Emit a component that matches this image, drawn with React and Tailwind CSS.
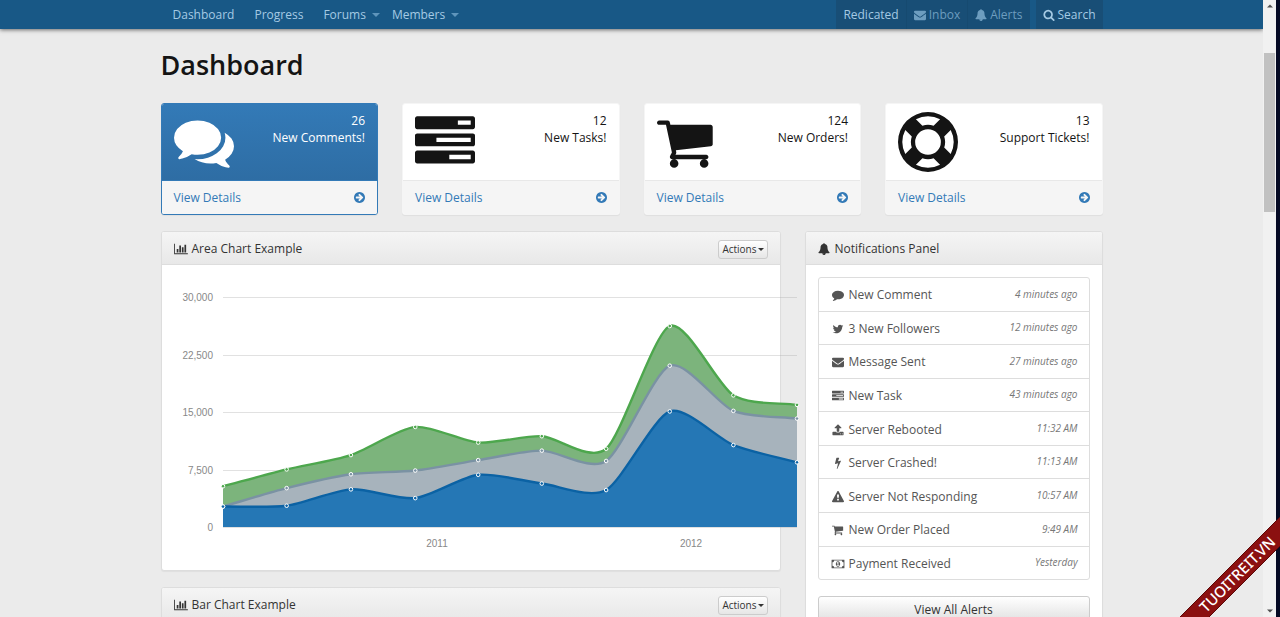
import React from "react";

const ICONS = {
  comments: { d: "M1408 768q0 139-94 257t-256.5 186.5-353.5 68.5q-86 0-176-16-124 88-278 128-36 9-86 16h-3q-11 0-20.5-8t-11.5-21q-1-3-1-6.5t.5-6.5 2-6l2.5-5t3.5-5.5 4-5 4.5-5 4-4.5q5-6 23-25t26-29.5 22.5-29 25-38.5 20.5-44q-124-72-195-177t-71-224q0-139 94-257t256.5-186.5 353.5-68.5 353.5 68.5 256.5 186.5 94 257zm384 256q0 120-71 224.5t-195 176.5q10 24 20.5 44t25 38.5 22.5 29 26 29.5 23 25q1 1 4 4.5t4.5 5 4 5 3.5 5.5l2.5 5t2 6 .5 6.5-1 6.5q-3 14-13 22t-22 7q-50-7-86-16-154-40-278-128-90 16-176 16-271 0-472-132 58 4 88 4 161 0 309-45t264-129q125-92 192-212t67-254q0-77-23-152 129 71 204 178t75 230z" },
  tasks: { d: "M1024 1408h640v-128h-640v128zm-384-512h1024v-128h-1024v128zm640-512h384v-128h-384v128zm512 832v256q0 26-19 45t-45 19h-1664q-26 0-45-19t-19-45v-256q0-26 19-45t45-19h1664q26 0 45 19t19 45zm0-512v256q0 26-19 45t-45 19h-1664q-26 0-45-19t-19-45v-256q0-26 19-45t45-19h1664q26 0 45 19t19 45zm0-512v256q0 26-19 45t-45 19h-1664q-26 0-45-19t-19-45v-256q0-26 19-45t45-19h1664q26 0 45 19t19 45z" },
  cart: { box: "64 0 1792 1792", d: "M704 1536q0 52-38 90t-90 38-90-38-38-90 38-90 90-38 90 38 38 90zm896 0q0 52-38 90t-90 38-90-38-38-90 38-90 90-38 90 38 38 90zm128-1088v512q0 24-16.5 42.5t-40.5 21.5l-1044 122q13 60 13 70 0 16-24 64h920q26 0 45 19t19 45-19 45-45 19h-1024q-26 0-45-19t-19-45q0-11 8-31.5t16-36 21.5-40 15.5-29.5l-177-823h-204q-26 0-45-19t-19-45 19-45 45-19h256q16 0 28.5 6.5t19.5 15.5 13 24.5 8 26 5.5 29.5 4.5 26h1201q26 0 45 19t19 45z" },
  support: { d: "M896 0q182 0 348 71t286 191 191 286 71 348-71 348-191 286-286 191-348 71-348-71-286-191-191-286-71-348 71-348 191-286 286-191 348-71zm0 128q-190 0-361 90l194 194q82-28 167-28t167 28l194-194q-171-90-361-90zm-678 1129l194-194q-28-82-28-167t28-167l-194-194q-90 171-90 361t90 361zm678 407q190 0 361-90l-194-194q-82 28-167 28t-167-28l-194 194q171 90 361 90zm0-384q159 0 271.5-112.5t112.5-271.5-112.5-271.5-271.5-112.5-271.5 112.5-112.5 271.5 112.5 271.5 271.5 112.5zm484-217l194 194q90-171 90-361t-90-361l-194 194q28 82 28 167t-28 167z" },
  arrow: { box: "128 128 1536 1536", d: "M1413 896q0-27-18-45l-91-91-362-362q-18-18-45-18t-45 18l-91 91q-18 18-18 45t18 45l189 189h-502q-26 0-45 19t-19 45v128q0 26 19 45t45 19h502l-189 189q-18 18-18 45t18 45l91 91q18 18 45 18t45-18l362-362 91-91q18-18 18-45zm251 0q0 209-103 385.5t-279.5 279.5-385.5 103-385.5-103-279.5-279.5-103-385.5 103-385.5 279.5-279.5 385.5-103 385.5 103 279.5 279.5 103 385.5z" },
  chart: { box: "0 0 2048 1792", d: "M640 896v512h-256v-512h256zm384-512v1024h-256v-1024h256zm1024 1152v128h-2048v-1536h128v1408h1920zm-640-896v768h-256v-768h256zm384-384v1152h-256v-1152h256z" },
  comment: { d: "M1792 896q0 174-120 321.5t-326 233-450 85.5q-70 0-145-8-198 175-460 242-49 14-114 22-17 2-30.5-9t-17.5-29v-1q-3-4-.5-12t2-10 4.5-9.5l6-9 7-8.5 8-9q7-8 31-34.5t34.5-38 31-39.5 32.5-51 27-59 26-76q-157-89-247.5-220t-90.5-281q0-130 71-248.5t191-204.5 286-136.5 348-50.5q244 0 450 85.5t326 233 120 321.5z" },
  twitter: { d: "M1684 408q-67 98-162 167 1 14 1 42 0 130-38 259.5t-115.5 248.5-184.5 210.5-258 146-323 54.5q-271 0-496-145 35 4 78 4 225 0 401-138-105-2-188-64.5t-114-159.5q33 5 61 5 43 0 85-11-112-23-185.5-111.5t-73.5-205.5v-4q68 38 146 41-66-44-105-115t-39-154q0-88 44-163 121 149 294.5 238.5t371.5 99.5q-8-38-8-74 0-134 94.5-228.5t228.5-94.5q140 0 236 102 109-21 205-78-37 115-142 178 93-10 186-50z" },
  envelope: { d: "M1792 710v794q0 66-47 113t-113 47h-1472q-66 0-113-47t-47-113v-794q44 49 101 87 362 246 497 345 57 42 92.5 65.5t94.5 48 110 24.5h2q51 0 110-24.5t94.5-48 92.5-65.5q170-123 498-345 57-39 100-87zm0-294q0 79-49 151t-122 123q-376 261-468 325-10 7-42.5 30.5t-54 38-52 32.5-57.5 27-50 9h-2q-23 0-50-9t-57.5-27-52-32.5-54-38-42.5-30.5q-91-64-262-182.5t-205-142.5q-62-42-117-115.5t-55-136.5q0-78 41.5-130t118.5-52h1472q65 0 112.5 47t47.5 113z" },
  upload: { d: "M1344 1472q0-26-19-45t-45-19-45 19-19 45 19 45 45 19 45-19 19-45zm256 0q0-26-19-45t-45-19-45 19-19 45 19 45 45 19 45-19 19-45zm128-224v320q0 40-28 68t-68 28h-1472q-40 0-68-28t-28-68v-320q0-40 28-68t68-28h427q21 56 70.5 92t110.5 36h256q61 0 110.5-36t70.5-92h427q40 0 68 28t28 68zm-325-648q-17 40-59 40h-256v448q0 26-19 45t-45 19h-256q-26 0-45-19t-19-45v-448h-256q-42 0-59-40-17-39 14-69l448-448q18-19 45-19t45 19l448 448q31 30 14 69z" },
  bolt: { d: "M1333 566q18 20 7 44l-540 1157q-13 25-42 25-4 0-14-2-17-5-25.5-19t-4.5-30l197-808-406 101q-4 1-12 1-18 0-31-11-18-15-13-39l201-825q4-16 17-26t30-10h328q19 0 32 12.5t13 29.5q0 8-5 18l-171 463 396-98q8-2 12-2 19 0 34 15z" },
  warning: { d: "M1024 1375v-190q0-14-9.5-23.5t-22.5-9.5h-192q-13 0-22.5 9.5t-9.5 23.5v190q0 14 9.5 23.5t22.5 9.5h192q13 0 22.5-9.5t9.5-23.5zm-2-374l18-459q0-12-10-19-13-11-24-11h-220q-11 0-24 11-10 7-10 21l17 457q0 10 10 16.5t24 6.5h185q14 0 23.5-6.5t10.5-16.5zm-14-934l768 1408q35 63-2 126-17 29-46.5 46t-63.5 17h-1536q-34 0-63.5-17t-46.5-46q-37-63-2-126l768-1408q17-31 47-49t65-18 65 18 47 49z" },
  bell: { d: "M912 1696q0-16-16-16-59 0-101.5-42.5t-42.5-101.5q0-16-16-16t-16 16q0 73 51.5 124.5t124.5 51.5q16 0 16-16zm816-288q0 52-38 90t-90 38h-448q0 106-75 181t-181 75-181-75-75-181h-448q-52 0-90-38t-38-90q50-42 91-88t85-119.5 74.5-158.5 50-206 19.5-260q0-152 117-282.5t307-158.5q-8-19-8-39 0-40 28-68t68-28 68 28 28 68q0 20-8 39 190 28 307 158.5t117 282.5q0 139 19.5 260t50 206 74.5 158.5 85 119.5 91 88z" },
  search: { d: "M1216 832q0-185-131.5-316.5t-316.5-131.5-316.5 131.5-131.5 316.5 131.5 316.5 316.5 131.5 316.5-131.5 131.5-316.5zm512 832q0 52-38 90t-90 38q-54 0-90-38l-343-342q-179 124-399 124-143 0-273.5-55.5t-225-150-150-225-55.5-273.5 55.5-273.5 150-225 225-150 273.5-55.5 273.5 55.5 225 150 150 225 55.5 273.5q0 220-124 399l343 343q37 37 37 90z" },
  money: { box: "0 0 1920 1792", d: "M768 1152h384v-96h-128v-448h-114l-148 137 77 80q42-37 55-57h2v288h-128v96zm512-256q0 70-21 142t-59.5 134-101.5 101-138 39-138-39-101.5-101-59.5-134-21-142 21-142 59.5-134 101.5-101 138-39 138 39 101.5 101 59.5 134 21 142zm512 256v-512q-106 0-181-75t-75-181h-1152q0 106-75 181t-181 75v512q106 0 181 75t75 181h1152q0-106 75-181t181-75zm128-832v1152q0 26-19 45t-45 19h-1792q-26 0-45-19t-19-45v-1152q0-26 19-45t45-19h1792q26 0 45 19t19 45z" },
};

function Icon({ name, className }) {
  const icon = ICONS[name];
  return (
    <svg viewBox={icon.box || "0 0 1792 1792"} className={`shrink-0 ${className}`} fill="currentColor" aria-hidden="true">
      <path d={icon.d} />
    </svg>
  );
}

function Caret({ className }) {
  return (
    <svg viewBox="0 0 8 4" className={`shrink-0 ${className}`} fill="currentColor" aria-hidden="true">
      <path d="M0 0h8L4 4z" />
    </svg>
  );
}

function NavBar() {
  return (
    <nav className="relative h-[29px] shrink-0 bg-[#185886] text-xs text-[#a5cae4] shadow-[0_1px_4px_rgba(0,0,0,0.55)]">
      <div className="mx-auto flex h-full max-w-[942px] justify-between">
        <div className="flex items-center pl-3">
          <a href="#dashboard" className="mr-5">Dashboard</a>
          <a href="#progress" className="mr-5">Progress</a>
          <button type="button" className="mr-3 flex items-center gap-1.5">
            Forums <Caret className="h-1 w-2 text-[#5f95bc]" />
          </button>
          <button type="button" className="flex items-center gap-1.5">
            Members <Caret className="h-1 w-2 text-[#5f95bc]" />
          </button>
        </div>
        <div className="flex gap-1.5">
          <div className="flex bg-[#184e76]">
            <a href="#account" className="flex items-center border-r border-[#164a70] px-[7px]">Redicated</a>
            <a href="#inbox" className="flex items-center gap-[3px] border-r border-[#164a70] px-[7px] text-[#6d9dbf]">
              <Icon name="envelope" className="size-3" />Inbox
            </a>
            <a href="#alerts" className="flex items-center gap-[3px] px-[7px] text-[#6d9dbf]">
              <Icon name="bell" className="size-3" />Alerts
            </a>
          </div>
          <a href="#search" className="flex items-center gap-[3px] bg-[#184e76] px-[7px]">
            <Icon name="search" className="size-3" />Search
          </a>
        </div>
      </div>
    </nav>
  );
}

const CARDS = [
  { icon: "comments", count: 26, label: "New Comments!", active: true },
  { icon: "tasks", count: 12, label: "New Tasks!" },
  { icon: "cart", count: 124, label: "New Orders!" },
  { icon: "support", count: 13, label: "Support Tickets!" },
];

function StatCard({ icon, count, label, active }) {
  return (
    <section className={`overflow-hidden rounded-[3px] border bg-white shadow-[0_1px_1px_rgba(0,0,0,0.05)] ${active ? "border-[#337ab7]" : "border-[#f5f5f5]"}`}>
      <div className={`flex h-[77px] justify-between border-b px-3 pt-2 ${active ? "border-[#337ab7] bg-linear-to-b from-[#337ab7] to-[#2e6da4] text-white" : "border-[#e8e8e8] text-[#141414]"}`}>
        <Icon name={icon} className="size-[60px]" />
        <div className="text-right text-xs leading-[17px]">
          <div>{count}</div>
          <div>{label}</div>
        </div>
      </div>
      <a href="#details" className="flex h-[33px] items-center justify-between bg-[#f5f5f5] px-3 text-xs text-[#337ab7]">
        View Details
        <Icon name="arrow" className="size-[11px]" />
      </a>
    </section>
  );
}

function Panel({ icon, title, actions, children }) {
  return (
    <section className="rounded-[3px] border border-[#dddddd] bg-white shadow-[0_1px_1px_rgba(0,0,0,0.05)]">
      <header className="flex h-[33px] items-center justify-between rounded-t-[2px] border-b border-[#dddddd] bg-linear-to-b from-[#f5f5f5] to-[#e8e8e8] px-3 pt-0.5 text-[#333]">
        <h2 className="flex items-center gap-1 text-xs">
          <Icon name={icon} className={icon === "chart" ? "h-3 w-3.5" : "mr-px size-3"} />
          {title}
        </h2>
        {actions && (
          <button type="button" className="flex h-[19px] items-center gap-px rounded-[3px] border border-[#ccc] bg-linear-to-b from-white to-[#e6e6e6] px-[3px] text-[10px] text-[#333]">
            Actions <Caret className="h-[3px] w-1.5" />
          </button>
        )}
      </header>
      {children}
    </section>
  );
}

const SALES = [
  [0, 2666, 0, 2647],
  [91, 2778, 2294, 2441],
  [183, 4912, 1969, 2501],
  [275, 3767, 3597, 5689],
  [365, 6810, 1914, 2293],
  [456, 5670, 4293, 1881],
  [548, 4820, 3795, 1588],
  [639, 15073, 5967, 5175],
  [730, 10687, 4460, 2028],
  [821, 8432, 5713, 1791],
];
const LEFT = 49;
const WIDTH = 574;
const BASE = 250;
const HEIGHT = 230;
const SERIES = [
  { fill: "#7cb47c", line: "#4da74d", keys: 3 },
  { fill: "#a7b3bc", line: "#7a92a3", keys: 2 },
  { fill: "#2577b5", line: "#0b62a4", keys: 1 },
];

function seriesPoints(keys) {
  return SALES.map((row) => {
    const total = row.slice(1, keys + 1).reduce((a, b) => a + b, 0);
    return { x: LEFT + (row[0] / 821) * WIDTH, y: BASE - (total / 30000) * HEIGHT };
  });
}

function smoothPath(points) {
  const slopes = points.map((_, i) => {
    const a = points[Math.max(0, i - 1)];
    const b = points[Math.min(points.length - 1, i + 1)];
    return (b.y - a.y) / (b.x - a.x);
  });
  return points.reduce((path, p, i) => {
    if (i === 0) return `M${p.x},${p.y}`;
    const q = points[i - 1];
    const step = (p.x - q.x) / 4;
    const c1 = Math.min(BASE, q.y + step * slopes[i - 1]);
    const c2 = Math.min(BASE, p.y - step * slopes[i]);
    return `${path}C${q.x + step},${c1},${p.x - step},${c2},${p.x},${p.y}`;
  }, "");
}

function AreaChart() {
  return (
    <svg className="block h-[281px] w-full overflow-visible font-['Liberation_Sans',sans-serif] text-[10px]" role="img" aria-label="Area chart">
      {[0, 7500, 15000, 22500, 30000].map((v) => {
        const y = BASE - (v / 30000) * HEIGHT;
        return (
          <g key={v}>
            <text x={LEFT - 10} y={y + 4} textAnchor="end" fill="#888">{v.toLocaleString("en-US")}</text>
            <path d={`M${LEFT} ${Math.round(y) + 0.5}h${WIDTH}`} stroke="#aaa" strokeOpacity="0.35" />
          </g>
        );
      })}
      {SERIES.map(({ fill, line, keys }) => {
        const path = smoothPath(seriesPoints(keys));
        return (
          <g key={keys}>
            <path d={`${path}V${BASE}H${LEFT}Z`} fill={fill} />
            <path d={path} fill="none" stroke={line} strokeWidth="2.4" />
          </g>
        );
      })}
      {SERIES.map(({ line, keys }) =>
        seriesPoints(keys).map((p) => (
          <circle key={`${keys}-${p.x}`} cx={p.x} cy={p.y} r="1.8" fill={line} stroke="#fff" />
        ))
      )}
      <text x="263" y="270" textAnchor="middle" fill="#888">2011</text>
      <text x="517" y="270" textAnchor="middle" fill="#888">2012</text>
    </svg>
  );
}

const ALERTS = [
  ["comment", "New Comment", "4 minutes ago"],
  ["twitter", "3 New Followers", "12 minutes ago"],
  ["envelope", "Message Sent", "27 minutes ago"],
  ["tasks", "New Task", "43 minutes ago"],
  ["upload", "Server Rebooted", "11:32 AM"],
  ["bolt", "Server Crashed!", "11:13 AM"],
  ["warning", "Server Not Responding", "10:57 AM"],
  ["cart", "New Order Placed", "9:49 AM"],
  ["money", "Payment Received", "Yesterday"],
];

function Notifications() {
  return (
    <div className="p-3">
      <div className="flex h-[303px] flex-col divide-y divide-[#ddd] rounded-[3px] border border-[#ddd]">
        {ALERTS.map(([icon, text, time]) => (
          <a key={text} href="#alert" className="flex flex-1 items-center justify-between pt-0.5 pr-[11px] pl-3 text-xs text-[#555]">
            <span className="flex items-center gap-1">
              <Icon name={icon} className={icon === "money" ? "h-3 w-3.5" : "mx-px size-3"} />
              {text}
            </span>
            <em className="pb-0.5 text-[10px] text-[#777]">{time}</em>
          </a>
        ))}
      </div>
      <button type="button" className="mt-4 h-[27px] w-full rounded-[3px] border border-[#ccc] bg-linear-to-b from-white to-[#e0e0e0] text-xs text-[#333]">
        View All Alerts
      </button>
    </div>
  );
}

function ScrollBar() {
  return (
    <div className="flex w-[17px] shrink-0 flex-col items-center border-r-4 border-[#050a24] bg-[#f1f1f1] py-1" aria-hidden="true">
      <Caret className="h-1 w-1.5 rotate-180 text-[#505050]" />
      <div className="mt-[45px] h-[159px] w-[11px] bg-[#c1c1c1]" />
      <Caret className="mt-auto h-1 w-1.5 text-[#505050]" />
    </div>
  );
}

function Ribbon() {
  return (
    <svg viewBox="0 0 100 100" className="pointer-events-none absolute right-0 bottom-0 size-[100px]">
      <path d="M0 100L100 0V29L29 100Z" fill="#8b1010" />
      <path d="M0 100L100 0M29 100L100 29" stroke="#5c0808" />
      <text
        x="57"
        y="57"
        transform="rotate(-45 57 57)"
        textAnchor="middle"
        dominantBaseline="central"
        fill="#fff"
        className="font-['Noto_Sans',sans-serif] text-[15px] font-medium"
      >
        TUOITREIT.VN
      </text>
    </svg>
  );
}

export default function App() {
  return (
    <div className="relative flex h-screen overflow-hidden bg-[#ebebeb] font-['Open_Sans','Noto_Sans',sans-serif]">
      <div className="flex min-w-0 flex-1 flex-col overflow-hidden">
        <NavBar />
        <main className="mx-auto w-full max-w-[942px] shrink-0 pt-3.5">
          <h1 className="text-[27px] leading-[44px] font-semibold text-[#141414]">Dashboard</h1>
          <div className="mt-4 grid grid-cols-4 gap-6">
            {CARDS.map((card) => <StatCard key={card.icon} {...card} />)}
          </div>
          <div className="mt-4 grid grid-cols-12 items-start gap-6">
            <div className="col-span-8 flex flex-col gap-4">
              <Panel icon="chart" title="Area Chart Example" actions>
                <div className="p-3">
                  <AreaChart />
                </div>
              </Panel>
              <Panel icon="chart" title="Bar Chart Example" actions>
                <div className="h-72" />
              </Panel>
            </div>
            <div className="col-span-4">
              <Panel icon="bell" title="Notifications Panel">
                <Notifications />
              </Panel>
            </div>
          </div>
        </main>
      </div>
      <ScrollBar />
      <Ribbon />
    </div>
  );
}
